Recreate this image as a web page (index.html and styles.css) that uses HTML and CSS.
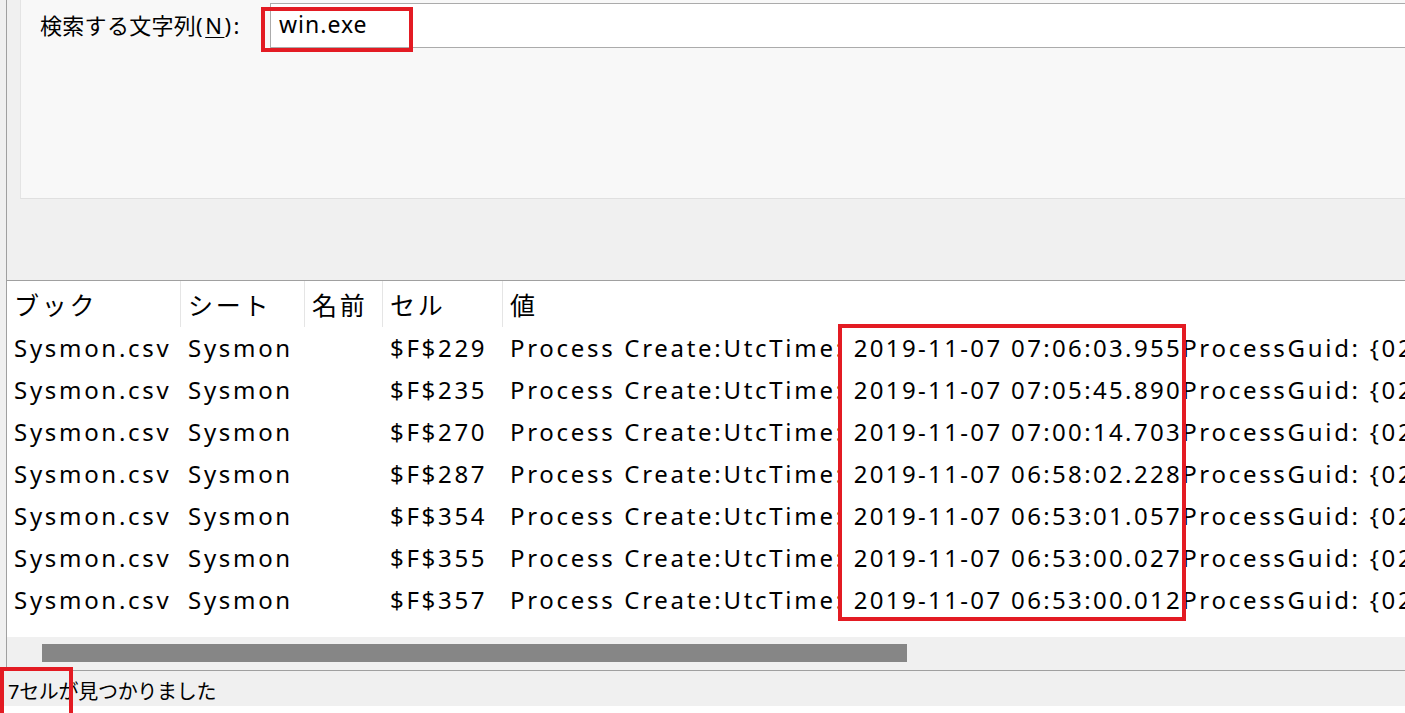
FILE: index.html
```html
<!DOCTYPE html>
<html lang="ja">
<head>
<meta charset="utf-8">
<title>検索</title>
<link rel="stylesheet" href="styles.css">
</head>
<body>
<div class="screen">
  <div class="window">
    <div class="main">
      <div class="top-area">
        <div class="search-panel">
          <div class="search-row">
            <span class="search-label">検索する文字列<span class="key">(<u>N</u>):</span></span>
            <div class="search-input">win.exe</div>
          </div>
        </div>
      </div>
      <div class="results">
        <div class="list">
          <div class="row header">
            <div class="cell">ブック</div>
            <div class="cell">シート</div>
            <div class="cell">名前</div>
            <div class="cell">セル</div>
            <div class="cell last">値</div>
          </div>
          <div class="row">
            <div class="cell">Sysmon.csv</div><div class="cell">Sysmon</div><div class="cell"></div><div class="cell">$F$229</div>
            <div class="cell last">Process Create:UtcTime: <span class="ts">2019-11-07 07:06:03.955</span>ProcessGuid: {02B3F5A8-C1F3-5DC3-0000-0010E4A61A00}</div>
          </div>
          <div class="row">
            <div class="cell">Sysmon.csv</div><div class="cell">Sysmon</div><div class="cell"></div><div class="cell">$F$235</div>
            <div class="cell last">Process Create:UtcTime: <span class="ts">2019-11-07 07:05:45.890</span>ProcessGuid: {02B3F5A8-C1E1-5DC3-0000-0010B9901A00}</div>
          </div>
          <div class="row">
            <div class="cell">Sysmon.csv</div><div class="cell">Sysmon</div><div class="cell"></div><div class="cell">$F$270</div>
            <div class="cell last">Process Create:UtcTime: <span class="ts">2019-11-07 07:00:14.703</span>ProcessGuid: {02B3F5A8-C096-5DC3-0000-0010D2F11900}</div>
          </div>
          <div class="row">
            <div class="cell">Sysmon.csv</div><div class="cell">Sysmon</div><div class="cell"></div><div class="cell">$F$287</div>
            <div class="cell last">Process Create:UtcTime: <span class="ts">2019-11-07 06:58:02.228</span>ProcessGuid: {02B3F5A8-C012-5DC3-0000-00104C8F1900}</div>
          </div>
          <div class="row">
            <div class="cell">Sysmon.csv</div><div class="cell">Sysmon</div><div class="cell"></div><div class="cell">$F$354</div>
            <div class="cell last">Process Create:UtcTime: <span class="ts">2019-11-07 06:53:01.057</span>ProcessGuid: {02B3F5A8-BEE5-5DC3-0000-0010A7321900}</div>
          </div>
          <div class="row">
            <div class="cell">Sysmon.csv</div><div class="cell">Sysmon</div><div class="cell"></div><div class="cell">$F$355</div>
            <div class="cell last">Process Create:UtcTime: <span class="ts">2019-11-07 06:53:00.027</span>ProcessGuid: {02B3F5A8-BEE4-5DC3-0000-001091301900}</div>
          </div>
          <div class="row">
            <div class="cell">Sysmon.csv</div><div class="cell">Sysmon</div><div class="cell"></div><div class="cell">$F$357</div>
            <div class="cell last">Process Create:UtcTime: <span class="ts">2019-11-07 06:53:00.012</span>ProcessGuid: {02B3F5A8-BEE4-5DC3-0000-00103F2F1900}</div>
          </div>
        </div>
        <div class="hscroll"><div class="thumb"></div></div>
      </div>
    </div>
    <div class="status">7セルが見つかりました</div>
  </div>
  <div class="mark mark-search"></div>
  <div class="mark mark-dates"></div>
  <div class="mark mark-count"></div>
</div>
</body>
</html>
```
FILE: styles.css
```css
html, body {
  margin: 0;
  padding: 0;
  background: #ffffff;
}

body {
  font-family: "Noto Sans", "Noto Sans CJK JP", sans-serif;
  color: #000000;
  overflow: hidden;
}

.screen {
  position: relative;
  width: 1405px;
  height: 713px;
  overflow: hidden;
}

.window {
  height: 706px;
  background: #f0f0f0;
  display: flex;
  flex-direction: column;
  overflow: hidden;
}

.main {
  flex: none;
  margin-left: 6px;
  border-left: 1px solid #a0a0a0;
  border-bottom: 1px solid #a0a0a0;
  height: 671px;
  box-sizing: border-box;
  display: flex;
  flex-direction: column;
}

.top-area {
  flex: none;
  height: 280px;
  padding-left: 13px;
  box-sizing: border-box;
}

.search-panel {
  height: 199px;
  box-sizing: border-box;
  background: #f8f8f8;
  border-left: 1px solid #e4e4e4;
  border-bottom: 1px solid #e0e0e0;
  padding-top: 3px;
}

.search-row {
  display: flex;
  align-items: center;
}

.search-label {
  flex: 0 0 249px;
  box-sizing: border-box;
  padding-left: 19px;
  font-size: 22px;
  letter-spacing: 0.3px;
  line-height: 45px;
  white-space: nowrap;
}

.search-label .key {
  letter-spacing: 2.5px;
}

.search-label u {
  text-decoration-thickness: 1px;
  text-underline-offset: 3px;
}

.search-input {
  flex: 1;
  height: 45px;
  box-sizing: border-box;
  border: 1px solid #ababab;
  border-right: none;
  background: #ffffff;
  padding-left: 8px;
  font-size: 23px;
  letter-spacing: 1px;
  line-height: 41px;
  white-space: nowrap;
}

.results {
  flex: none;
  height: 390px;
  box-sizing: border-box;
  border-top: 1px solid #a0a0a0;
  background: #ffffff;
  display: flex;
  flex-direction: column;
}

.list {
  height: 356px;
  overflow: hidden;
  font-size: 24px;
  letter-spacing: 2.7px;
}

.row {
  display: grid;
  grid-template-columns: 174px 124px 78px 120px minmax(0, 1fr);
  height: 42px;
  align-items: center;
  white-space: nowrap;
}

.row.header {
  height: 46px;
  align-items: stretch;
  font-size: 25px;
}

.cell {
  padding-left: 7px;
  line-height: 42px;
  overflow: visible;
}

.cell .ts {
  letter-spacing: 2.35px;
}

.row.header .cell {
  border-right: 1px solid #e5e5e5;
  display: flex;
  align-items: center;
  padding-top: 2px;
  box-sizing: border-box;
}

.row.header .cell.last {
  border-right: none;
}

.hscroll {
  height: 33px;
  box-sizing: border-box;
  background: #f0f0f0;
  padding: 7px 0 0 35px;
}

.thumb {
  width: 865px;
  height: 18px;
  background: #868686;
}

.status {
  flex: none;
  height: 35px;
  box-sizing: border-box;
  padding: 3px 0 0 8px;
  font-size: 20px;
  letter-spacing: -0.3px;
  display: flex;
  align-items: center;
  white-space: nowrap;
}

.mark {
  position: absolute;
  border: 4px solid #e31b23;
  box-sizing: border-box;
}

.mark-search {
  left: 261px;
  top: 7px;
  width: 152px;
  height: 45px;
}

.mark-dates {
  left: 838px;
  top: 324px;
  width: 348px;
  height: 297px;
}

.mark-count {
  left: 0;
  top: 667px;
  width: 73px;
  height: 50px;
}
```
